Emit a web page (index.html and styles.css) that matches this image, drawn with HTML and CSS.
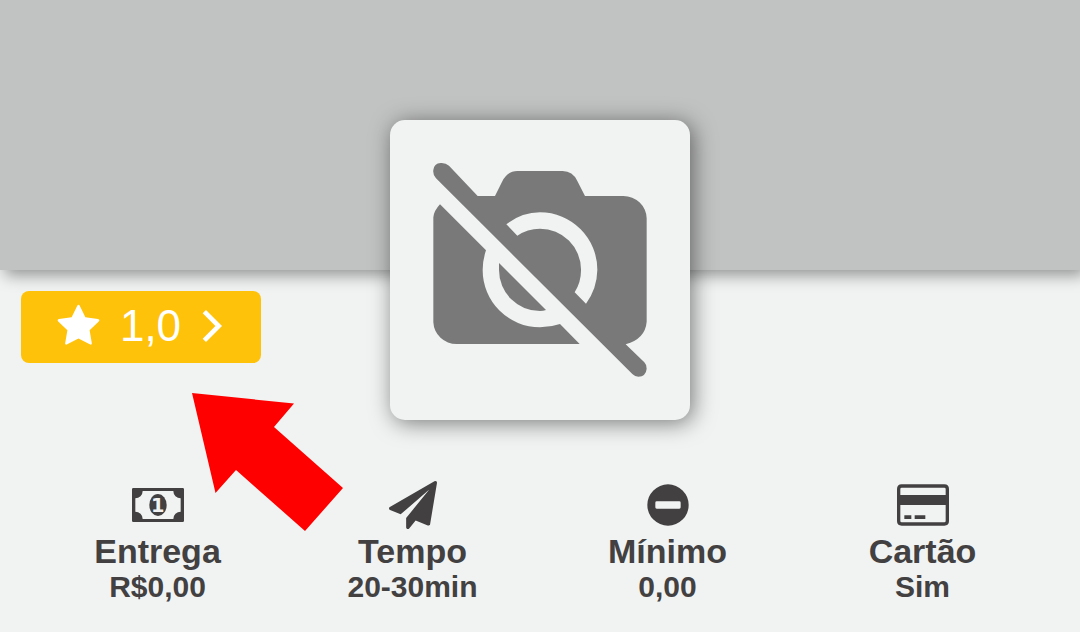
FILE: index.html
```html
<!DOCTYPE html>
<html lang="pt-BR">
<head>
    <meta charset="UTF-8">
    <meta name="viewport" content="width=device-width, initial-scale=1.0">
    <title>Loja</title>
    <link rel="stylesheet" href="styles.css">
</head>
<body>
<header class="banner"></header>
<main class="store">
    <div class="top">
        <button type="button" class="rating">
            <svg class="star" viewBox="0 0 1792 1792" aria-hidden="true"><path d="M1728 647q0 22-26 48l-363 354 86 500q1 7 1 20 0 21-10.500 35.500t-30.500 14.500q-19 0-40-12l-449-236-449 236q-22 12-40 12-21 0-31.500-14.500t-10.500-35.500q0-6 2-20l86-500-364-354q-25-27-25-48 0-37 56-46l502-73 225-455q19-41 49-41t49 41l225 455 502 73q56 9 56 46z"/></svg>
            <span>1,0</span>
            <svg class="chevron" viewBox="0 0 24 36" aria-hidden="true"><path d="M2.700 5.200 6 2 22 18 6 34 2.700 30.800 15.400 18z"/></svg>
        </button>
        <div class="logo">
            <svg viewBox="60 60 900 900" role="img" aria-label="Sem foto">
                <path fill-rule="evenodd" d="M190 210Q192 190 212 189Q227 188 237 197L323 288H375L397 244Q412 213 442 213H578Q608 213 622 243L645 288H760A70 68 0 0 1 830 355V665Q826 716 767 733L823 787Q830 794 830 806Q828 829 805 830Q795 830 787 822L198 235Q188 225 190 210Z
                    M409 373Q455 337 510 337A172 172 0 0 1 682 510Q681 566 648 611L614 577Q634 545 633 508A123 123 0 0 0 510 386Q472 386 442 407Z"/>
                <path d="M210 313L348 451Q338 480 338 510A172 172 0 0 0 510 682Q541 682 570 672L629 732H260A70 68 0 0 1 190 667V352Q192 332 210 313Z"/>
                <path d="M387 489L528 630Q520 633 510 633A123 123 0 0 1 387 510Z"/>
            </svg>
        </div>
    </div>
    <div class="infos">
        <div class="info">
            <svg class="icon" viewBox="0 0 156 102" aria-hidden="true">
                <path fill-rule="evenodd" d="M4 0H152Q156 0 156 4V98Q156 102 152 102H4Q0 102 0 98V4Q0 0 4 0ZM32 9A22 22 0 0 1 10 31V71A22 22 0 0 1 32 93H124A22 22 0 0 1 146 71V31A22 22 0 0 1 124 9Z"/>
                <ellipse cx="78" cy="51" rx="26" ry="33"/>
                <text class="bill" x="77" y="73" text-anchor="middle">1</text>
            </svg>
            <h2>Entrega</h2>
            <p>R$0,00</p>
        </div>
        <div class="info">
            <svg class="icon" viewBox="0 0 1792 1792" aria-hidden="true"><path d="M1764 11q33 24 27 64l-256 1536q-5 29-32 45-14 8-31 8-11 0-24-5l-453-185-242 295q-18 23-49 23-13 0-22-4-19-7-30.500-23.500t-11.500-36.500v-349l864-1059-1069 925-395-162q-37-14-40-55-2-40 32-59l1664-960q15-9 32-9 20 0 36 11z"/></svg>
            <h2>Tempo</h2>
            <p>20-30min</p>
        </div>
        <div class="info">
            <svg class="icon" viewBox="0 0 156 144" aria-hidden="true"><path fill-rule="evenodd" d="M78 10A62 62 0 0 1 78 134A62 62 0 0 1 78 10ZM44 61Q40 61 40 65V79Q40 83 44 83H112Q116 83 116 79V65Q116 61 112 61Z"/></svg>
            <h2>Mínimo</h2>
            <p>0,00</p>
        </div>
        <div class="info">
            <svg class="icon" viewBox="0 0 156 124" aria-hidden="true"><path fill-rule="evenodd" d="M14 0H142Q156 0 156 14V110Q156 124 142 124H14Q0 124 0 110V14Q0 0 14 0ZM14 10Q10 10 10 14V32H146V14Q146 10 142 10ZM10 62V110Q10 114 14 114H142Q146 114 146 110V62ZM22 93H43V104H22ZM53 93H85V104H53Z"/></svg>
            <h2>Cartão</h2>
            <p>Sim</p>
        </div>
    </div>
    <svg class="arrow" viewBox="0 0 151 138" aria-hidden="true"><path d="M0 0 102 10.500 82 34 151 95 113 138 44 77 23.500 100z"/></svg>
</main>
</body>
</html>
```
FILE: styles.css
```css
* {
    box-sizing: border-box;
}
body {
    margin: 0;
    background: #f0f3f2;
    color: #434041;
    font-family: Arial, "Liberation Sans", sans-serif;
}

.banner {
    height: 270px;
    background: #c1c3c2;
    box-shadow: 5px 5px 15px rgba(0, 0, 0, .4);
}

.store {
    position: relative;
}
.top {
    display: grid;
    grid-template-columns: 1fr 300px 1fr;
    align-items: start;
}

/* avaliação */
.rating {
    display: flex;
    align-items: center;
    justify-content: center;
    gap: 19px;
    width: 240px;
    height: 72px;
    margin: 21px 0 0 21px;
    padding: 0 2px 2px 0;
    border: 0;
    border-radius: 8px;
    background: #ffc20a;
    color: #fff;
    font-family: inherit;
    font-size: 44px;
    cursor: pointer;
}
.rating svg {
    fill: #fff;
}
.star {
    width: 45px;
    height: 45px;
}
.chevron {
    width: 24px;
    height: 36px;
}

/* a foto sobe por cima do banner */
.logo {
    height: 300px;
    margin-top: -150px;
    border-radius: 15px;
    background: #f0f3f2;
    box-shadow: 3px 3px 22px rgba(0, 0, 0, .5);
}
.logo svg {
    display: block;
    width: 100%;
    fill: #797979;
}

.infos {
    display: grid;
    grid-template-columns: repeat(4, 1fr);
    padding: 61px 30px 27px;
}
.info {
    text-align: center;
}
.icon {
    display: block;
    width: 52px;
    height: 48px;
    margin: 0 auto 4px;
    fill: #434041;
}
.bill {
    fill: #f0f3f2;
    font-family: "DejaVu Sans", sans-serif;
    font-size: 58px;
    font-weight: bold;
}
.info h2,
.info p {
    margin: 0;
    font-size: 34px;
    font-weight: bold;
    line-height: 36px;
}
.info p {
    font-size: 30px;
}

.arrow {
    position: absolute;
    top: 123px;
    left: 192px;
    width: 151px;
    height: 138px;
    fill: #f00;
}
```
